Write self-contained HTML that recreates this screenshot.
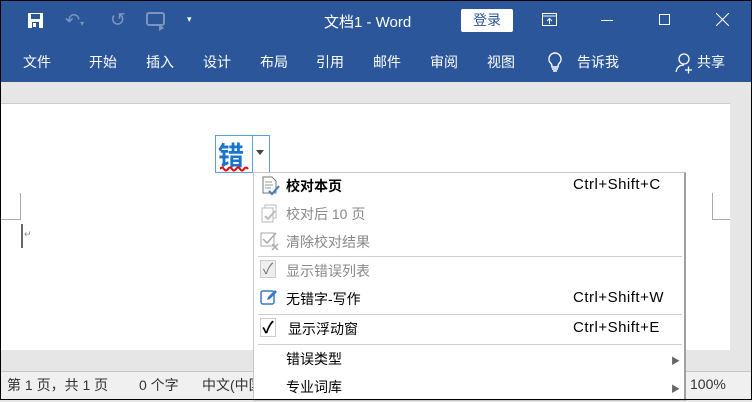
<!DOCTYPE html>
<html><head><meta charset="utf-8"><style>
*{margin:0;padding:0;box-sizing:border-box}
body{width:752px;height:400px;overflow:hidden;font-family:"Liberation Sans","Noto Sans CJK SC",sans-serif;background:#e6e6e6;position:relative}
.a{position:absolute}
#top{left:0;top:0;width:752px;height:82px;background:#2b579a}
.w{color:#fff;font-size:14px}
.tab{top:52px;color:#fff;font-size:14px}
.mi{position:absolute;left:0;width:431px;height:28px;font-size:14px;color:#000}
.mi .t{position:absolute;left:32px;top:3px}
.mi .k{position:absolute;left:319px;top:3px;font-size:15px;letter-spacing:0.5px}
.g{color:#888}
.sep{position:absolute;left:4px;width:424px;height:1px;background:#d0d0d0}
.st{position:absolute;top:375px;font-size:14px;color:#333}
</style></head><body>
<div id="top" class="a"></div>
<div class="a" style="left:0;top:0;width:752px;height:400px;border:1px solid #000;z-index:9;pointer-events:none"></div>
<svg class="a" style="left:27px;top:12px" width="20" height="18"><rect x="1" y="1" width="15" height="15" fill="#fff"/><rect x="4" y="2" width="9" height="5" fill="#2b579a"/><rect x="5" y="10" width="7" height="6" fill="#2b579a"/><rect x="6" y="11" width="3" height="4" fill="#fff"/></svg>
<div class="a" style="left:65px;top:10px;color:#7d95bd;font-size:18px">↶<span style="font-size:8px">▾</span></div>
<div class="a" style="left:110px;top:9px;color:#7d95bd;font-size:19px">↺</div>
<svg class="a" style="left:146px;top:12px" width="22" height="20"><rect x="1" y="1" width="17" height="12" rx="2" fill="none" stroke="#7d95bd" stroke-width="2"/><path d="M13 12 l5 4 -5 3z" fill="#7d95bd"/></svg>
<div class="a w" style="left:187px;top:14px;font-size:9px">▾</div>
<div class="a w" style="left:324px;top:11px;font-size:15px">文档1 - Word</div>
<div class="a" style="left:461px;top:9px;width:52px;height:23px;background:#fff;border-radius:2px;color:#2b579a;font-size:14px;text-align:center;line-height:23px">登录</div>
<svg class="a" style="left:542px;top:13px" width="16" height="14"><rect x="0.5" y="0.5" width="14" height="12" fill="none" stroke="#fff"/><path d="M1 3h13M7.5 11V6M5 8l2.5-2.5L10 8" stroke="#fff" fill="none"/></svg>
<div class="a" style="left:601px;top:20px;width:12px;height:1px;background:#fff"></div>
<div class="a" style="left:659px;top:14px;width:11px;height:11px;border:1px solid #fff"></div>
<svg class="a" style="left:716px;top:13px" width="13" height="13"><path d="M0 0L13 13M13 0L0 13" stroke="#fff"/></svg>
<div class="a tab" style="left:23px">文件</div>
<div class="a tab" style="left:89px">开始</div>
<div class="a tab" style="left:146px">插入</div>
<div class="a tab" style="left:203px">设计</div>
<div class="a tab" style="left:260px">布局</div>
<div class="a tab" style="left:316px">引用</div>
<div class="a tab" style="left:373px">邮件</div>
<div class="a tab" style="left:430px">审阅</div>
<div class="a tab" style="left:487px">视图</div>
<svg class="a" style="left:547px;top:52px" width="16" height="22"><path d="M8 1a6 6 0 0 0-4 10.5c1 1 1 2 1 3.5h6c0-1.5 0-2.5 1-3.5A6 6 0 0 0 8 1z" fill="none" stroke="#fff" stroke-width="1.4"/><path d="M5 17h6M6 19h4" stroke="#fff" stroke-width="1.4"/></svg>
<div class="a tab" style="left:577px">告诉我</div>
<svg class="a" style="left:674px;top:52px" width="20" height="22"><circle cx="10" cy="7" r="5" fill="none" stroke="#fff" stroke-width="1.3"/><path d="M2 20c1-5 4-7 8-7" fill="none" stroke="#fff" stroke-width="1.3"/><path d="M11 18h7M14.5 14.5v7" stroke="#fff" stroke-width="1.3"/></svg>
<div class="a tab" style="left:697px">共享</div>
<div class="a" style="left:0;top:103px;width:730px;height:247px;background:#fff;border-top:1px solid #ccc"></div>
<div class="a" style="left:0;top:219px;width:21px;height:1px;background:#aaa"></div>
<div class="a" style="left:20px;top:193px;width:1px;height:27px;background:#aaa"></div>
<div class="a" style="left:21px;top:224px;width:2px;height:24px;background:#666"></div>
<div class="a" style="left:24px;top:229px;font-size:9px;color:#888">↵</div>
<div class="a" style="left:712px;top:193px;width:1px;height:27px;background:#aaa"></div>
<div class="a" style="left:713px;top:219px;width:17px;height:1px;background:#aaa"></div>
<div class="a" style="left:215px;top:135px;width:55px;height:38px;border:1px solid #5ba0dc;background:#fff"></div>
<div class="a" style="left:252px;top:135px;width:1px;height:38px;background:#5ba0dc"></div>
<div class="a" style="left:218px;top:136px;font-size:26px;font-weight:bold;color:#1874cd">错</div>
<svg class="a" style="left:220px;top:166px" width="30" height="7"><path d="M0 3q2-3 4 0t4 0 4 0 4 0 4 0 4 0 4 0" stroke="#e00" stroke-width="2" fill="none"/></svg>
<div class="a" style="left:256px;top:150px;border:4px solid transparent;border-top:5px solid #444;border-bottom:0"></div>
<div class="a" style="left:0;top:371px;width:752px;height:29px;background:#f0f0f0;border-top:1px solid #c6c6c6"></div>
<div class="st" style="left:7px">第 1 页，共 1 页</div>
<div class="st" style="left:139px">0 个字</div>
<div class="st" style="left:202px">中文(中国)</div>
<div class="a" style="left:690px;top:376px;font-size:14px;color:#333">100%</div>
<div class="a" style="left:253px;top:172px;width:433px;height:229px;background:#fff;border:1px solid #c8c8c8;border-right:2px solid #a0a0a0">
<svg class="a" style="left:6px;top:3px" width="22" height="22"><path d="M3 1h9l4 4v12H3z" fill="#fff" stroke="#777"/><path d="M5 6h7M5 9h8M5 12h6" stroke="#999"/><path d="M9 15l3 3 7-8" stroke="#3a7ac8" stroke-width="2" fill="none"/></svg>
<div class="mi" style="top:0"><span class="t" style="font-weight:bold">校对本页</span><span class="k">Ctrl+Shift+C</span></div>
<svg class="a" style="left:6px;top:31px" width="22" height="22"><rect x="5" y="1" width="11" height="13" fill="#fff" stroke="#bbb"/><rect x="2" y="4" width="11" height="14" fill="#fff" stroke="#bbb"/><path d="M5 12l3 3 7-8" stroke="#bbb" stroke-width="2" fill="none"/></svg>
<div class="mi g" style="top:28px"><span class="t">校对后 10 页</span></div>
<svg class="a" style="left:6px;top:59px" width="22" height="22"><rect x="1" y="1" width="13" height="13" fill="#fff" stroke="#aaa"/><path d="M3 7l4 4 9-10" stroke="#aaa" stroke-width="1.5" fill="none"/><path d="M12 12l6 6M18 12l-6 6" stroke="#aaa" stroke-width="1.5"/></svg>
<div class="mi g" style="top:56px"><span class="t">清除校对结果</span></div>
<div class="sep" style="top:83px"></div>
<div class="a" style="left:6px;top:87px;width:16px;height:18px;border:1px solid #ccc;background:#eee;color:#777;font-size:15px;text-align:center;line-height:18px">✓</div>
<div class="mi g" style="top:85px"><span class="t">显示错误列表</span></div>
<svg class="a" style="left:6px;top:115px" width="20" height="20"><rect x="1" y="3" width="13" height="13" rx="2" fill="none" stroke="#3a7ac8" stroke-width="1.5"/><path d="M7 12l1-3 7-7 2 2-7 7z" fill="#3a7ac8"/></svg>
<div class="mi" style="top:113px"><span class="t">无错字-写作</span><span class="k">Ctrl+Shift+W</span></div>
<div class="sep" style="top:141px"></div>
<div class="a" style="left:6px;top:145px;width:16px;height:19px;border:1px solid #ccc;background:#fff;color:#000;font-size:16px;font-weight:bold;text-align:center;line-height:19px">✓</div>
<div class="mi" style="top:143px"><span class="t" style="left:34px">显示浮动窗</span><span class="k">Ctrl+Shift+E</span></div>
<div class="sep" style="top:171px"></div>
<div class="mi" style="top:173px"><span class="t">错误类型</span><span class="a" style="left:417px;top:8px;font-size:9px;color:#666">▶</span></div>
<div class="mi" style="top:201px"><span class="t">专业词库</span><span class="a" style="left:417px;top:8px;font-size:9px;color:#666">▶</span></div>
</div>
</body></html>
